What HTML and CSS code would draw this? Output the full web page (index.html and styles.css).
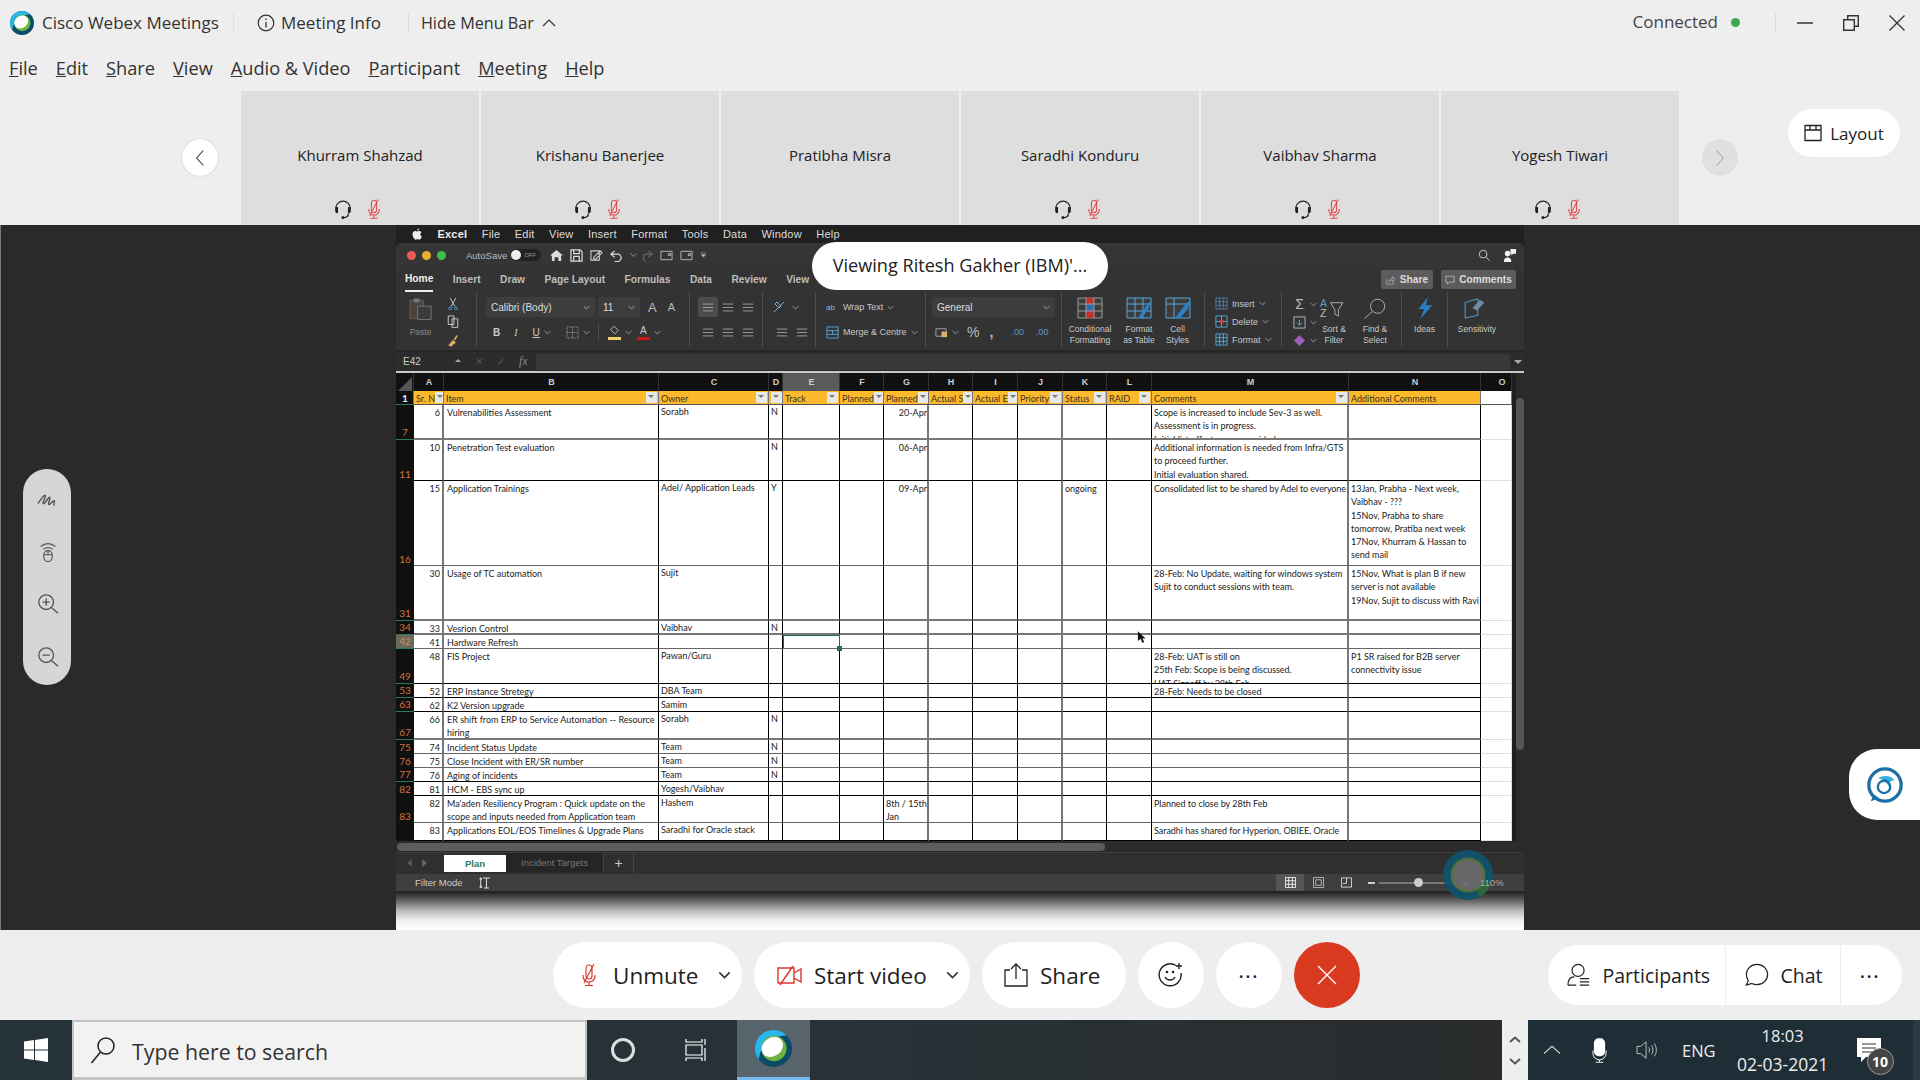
FILE: index.html
```html
<!DOCTYPE html>
<html lang="en">
<head>
    <meta charset="UTF-8">
    <title>Cisco Webex Meetings</title>
    <link rel="stylesheet" href="styles.css">
</head>
<body>
    <!-- shared icons -->
    <svg class="defs">
        <symbol id="webex" viewBox="0 0 24 24">
            <circle cx="12" cy="12" r="12" fill="#0b4a69"/>
            <path d="M12 0A12 12 0 0 0 2.500 19.300C3 11 9 3.500 20.500 3.500A12 12 0 0 0 12 0z" fill="#29b6e8"/>
            <circle cx="12.300" cy="12" r="8.200" fill="#6cb33f"/>
            <ellipse cx="11.200" cy="11" rx="7.400" ry="6" transform="rotate(-35 11.200 11)" fill="#fff"/>
        </symbol>
        <symbol id="headset" viewBox="0 0 20 24">
            <path d="M4 16.500a8 8 0 1 1 12 0M16 17c0 3-2 4.500-5 4.500" fill="none" stroke="currentColor" stroke-width="1.300"/>
            <rect x="1.500" y="9.500" width="3" height="7" rx="1.500" fill="currentColor"/>
            <rect x="15.500" y="9.500" width="3" height="7" rx="1.500" fill="currentColor"/>
            <circle cx="10" cy="21.500" r="1.700" fill="currentColor"/>
        </symbol>
        <symbol id="micoff" viewBox="0 0 16 24">
            <path d="M5 11V5a3 3 0 0 1 6 0v8a3 3 0 0 1-6 0zM2 12v1a6 6 0 0 0 12 0v-1M8 19v3M4 22.500h8M13 1L3 20" fill="none" stroke="currentColor" stroke-width="1.200"/>
        </symbol>
        <symbol id="chev" viewBox="0 0 10 6">
            <path d="M1 1l4 4 4-4" fill="none" stroke="currentColor" stroke-width="1.200"/>
        </symbol>
        <symbol id="lines" viewBox="0 0 14 10">
            <path d="M1 1h12M1 5h12M1 9h12" stroke="currentColor" stroke-width="1"/>
        </symbol>
    </svg>

    <header class="titlebar">
        <svg class="logo"><use href="#webex"/></svg>
        <span class="app-name">Cisco Webex Meetings</span>
        <span class="tsep first"></span>
        <svg class="info" viewBox="0 0 18 18"><circle cx="9" cy="9" r="7.800" fill="none" stroke="#333" stroke-width="1.200"/><path d="M9 8v5.500M9 4.500v1.500" stroke="#333" stroke-width="1.300"/></svg>
        <span class="tlabel">Meeting Info</span>
        <span class="tsep second"></span>
        <span class="tlabel hide">Hide Menu Bar</span>
        <svg class="caret" viewBox="0 0 14 8"><path d="M1 7l6-6 6 6" fill="none" stroke="#333" stroke-width="1.200"/></svg>
        <span class="status">Connected</span>
        <span class="dot"></span>
        <span class="tsep third"></span>
        <svg class="winbtn" viewBox="0 0 16 16"><path d="M0 8h16" stroke="#333" stroke-width="1.500"/></svg>
        <svg class="winbtn" viewBox="0 0 16 16"><path d="M.700 4.700h10.600v10.600H.700zM4.700 4.500V.700h10.600v10.600h-3.800" fill="none" stroke="#333" stroke-width="1.400"/></svg>
        <svg class="winbtn" viewBox="0 0 16 16"><path d="M.500.500l15 15M15.500.500l-15 15" stroke="#333" stroke-width="1.300"/></svg>
    </header>

    <nav class="menubar">
        <span><u>F</u>ile</span>
        <span><u>E</u>dit</span>
        <span><u>S</u>hare</span>
        <span><u>V</u>iew</span>
        <span><u>A</u>udio &amp; Video</span>
        <span><u>P</u>articipant</span>
        <span><u>M</u>eeting</span>
        <span><u>H</u>elp</span>
    </nav>

    <section class="strip">
        <button class="nav-round prev"><svg viewBox="0 0 12 20"><path d="M10 1L2 10l8 9" fill="none" stroke="#333" stroke-width="1.300"/></svg></button>
        <div class="tile"><span class="tname">Khurram Shahzad</span><div class="ticons"><svg class="hs"><use href="#headset"/></svg><svg class="mo"><use href="#micoff"/></svg></div></div>
        <div class="tile"><span class="tname">Krishanu Banerjee</span><div class="ticons"><svg class="hs"><use href="#headset"/></svg><svg class="mo"><use href="#micoff"/></svg></div></div>
        <div class="tile"><span class="tname">Pratibha Misra</span><div class="ticons"></div></div>
        <div class="tile"><span class="tname">Saradhi Konduru</span><div class="ticons"><svg class="hs"><use href="#headset"/></svg><svg class="mo"><use href="#micoff"/></svg></div></div>
        <div class="tile"><span class="tname">Vaibhav Sharma</span><div class="ticons"><svg class="hs"><use href="#headset"/></svg><svg class="mo"><use href="#micoff"/></svg></div></div>
        <div class="tile"><span class="tname">Yogesh Tiwari</span><div class="ticons"><svg class="hs"><use href="#headset"/></svg><svg class="mo"><use href="#micoff"/></svg></div></div>
        <button class="nav-round next"><svg viewBox="0 0 12 20"><path d="M2 1l8 9-8 9" fill="none" stroke="#aaa" stroke-width="1.300"/></svg></button>
        <button class="layout-btn"><svg viewBox="0 0 18 18"><path d="M1 1.500h16v15H1zM1 6h16M6 1.500V6M12 1.500V6" fill="none" stroke="#222" stroke-width="1.300"/></svg>Layout</button>
    </section>

    <main class="stage">
        <div class="shared">
            <div class="mac-menu">
                <svg class="apple" viewBox="0 0 14 16"><path d="M10 0c0 2-1.500 3.500-3 3.500C7 1.800 8.500.300 10 0zM7 4.500c1 0 2-.800 3.300-.800 1.200 0 2.300.600 3 1.700-2.500 1.500-2 5 .500 6-.700 2-2.200 4.600-3.600 4.600-1 0-1.400-.600-2.600-.600s-1.700.600-2.600.600C3.300 16 .800 12 .800 8.500.800 5.500 2.700 3.800 4.500 3.800 5.500 3.800 6.300 4.500 7 4.500z" fill="#eee"/></svg>
                <b>Excel</b><span>File</span><span>Edit</span><span>View</span><span>Insert</span><span>Format</span><span>Tools</span><span>Data</span><span>Window</span><span>Help</span>
            </div>

            <div class="xl-title">
                <i class="light red"></i><i class="light amber"></i><i class="light green"></i>
                <span class="autosave">AutoSave</span>
                <span class="toggle"><i></i>OFF</span>
                <svg class="qa" viewBox="0 0 14 14"><path d="M7 1L0 7h2v6h3V9h4v4h3V7h2z" fill="#ddd"/></svg>
                <svg class="qa" viewBox="0 0 14 14"><path d="M1 1h10l2 2v10H1zM4 1v4h6V1M4 13V8h6v5" fill="none" stroke="#ddd" stroke-width="1.300"/></svg>
                <svg class="qa" viewBox="0 0 14 14"><path d="M1 2h9v10H1zM4 9l7-7 2 2-7 7H4z" fill="none" stroke="#ccc" stroke-width="1.200"/></svg>
                <svg class="qa" viewBox="0 0 14 14"><path d="M5 2L1 5.500 5 9M1 5.500h7a4 4 0 0 1 0 8H5" fill="none" stroke="#ddd" stroke-width="1.300"/></svg>
                <svg class="qa-small"><use href="#chev"/></svg>
                <svg class="qa dim" viewBox="0 0 14 14"><path d="M9 2l4 3.500L9 9M12 5.500H6a4.500 4.500 0 0 0 0 8" fill="none" stroke="#666" stroke-width="1.300"/></svg>
                <svg class="qa" viewBox="0 0 14 14"><path d="M1 2.500h12v9H1zM9 5h2.500v2H9z" fill="none" stroke="#bbb" stroke-width="1"/></svg>
                <svg class="qa" viewBox="0 0 14 14"><path d="M1 2.500h12v9H1zM9 5h2.500v2H9z" fill="none" stroke="#bbb" stroke-width="1"/></svg>
                <svg class="qa-small" viewBox="0 0 10 8"><path d="M1 1h8M2 3.500h6L5 7z" stroke="#bbb" fill="#bbb" stroke-width=".8"/></svg>
                <svg class="find" viewBox="0 0 14 14"><circle cx="6" cy="6" r="4.500" fill="none" stroke="#ccc" stroke-width="1.100"/><path d="M9.500 9.500l4 4" stroke="#ccc" stroke-width="1.100"/></svg>
                <svg class="person" viewBox="0 0 16 16"><path d="M2 15c0-4 2-5 4-5s4 1 4 5zM6 9a3 3 0 1 1 0-6 3 3 0 0 1 0 6z" fill="#eee"/><path d="M9 1h6v5H12l-2 2V6H9z" fill="#eee"/></svg>
            </div>

            <div class="xl-tabs">
                <span class="active">Home</span><span>Insert</span><span>Draw</span><span>Page Layout</span><span>Formulas</span><span>Data</span><span>Review</span><span>View</span>
                <span class="xl-btn share"><svg viewBox="0 0 12 12"><path d="M1 5v6h8V8M4 8c0-3 2-4 4-4V2l3 3-3 3V6C6 6 5 7 4 8z" fill="none" stroke="#aaa"/></svg>Share</span>
                <span class="xl-btn comments"><svg viewBox="0 0 12 12"><path d="M1 1.500h10v7H5L3 11V8.500H1z" fill="none" stroke="#bbb"/></svg>Comments</span>
            </div>

            <div class="ribbon">
                <div class="rg g-clip">
                    <div class="paste">
                        <svg viewBox="0 0 26 24"><path d="M2 3h14v19H2z" fill="#4c433a" stroke="#6a5c4e"/><path d="M6 1h6v4H6z" fill="#777"/><path d="M10 9h14v14H10z" fill="#3c3c3c" stroke="#777"/></svg>
                        <span>Paste</span>
                    </div>
                    <div class="clip-tools">
                        <svg viewBox="0 0 12 14"><path d="M3 1l5 9M9 1L4 10" stroke="#ccc"/><circle cx="3" cy="12" r="1.500" fill="none" stroke="#4aa3df"/><circle cx="9" cy="12" r="1.500" fill="none" stroke="#4aa3df"/></svg>
                        <svg viewBox="0 0 12 14"><path d="M1 1h6v9H1zM5 4h6v9H5z" fill="#333" stroke="#ccc"/></svg>
                        <svg viewBox="0 0 12 14"><path d="M1 12l5-6 3 3-5 4zM7 5l3-4 1 1-3 5z" fill="#d9b36a"/></svg>
                    </div>
                </div>
                <div class="rg g-font">
                    <div class="rrow">
                        <span class="select font-name">Calibri (Body)<svg><use href="#chev"/></svg></span>
                        <span class="select font-size">11<svg><use href="#chev"/></svg></span>
                        <span class="grow-a">A</span><span class="shrink-a">A</span>
                    </div>
                    <div class="rrow fmt">
                        <b class="f-b">B</b><em class="f-i">I</em><u class="f-u">U</u><svg class="mini"><use href="#chev"/></svg>
                        <svg class="bord" viewBox="0 0 14 14"><path d="M1 1h12v12H1zM7 1v12M1 7h12" fill="none" stroke="#aaa" stroke-dasharray="1 1"/></svg><svg class="mini"><use href="#chev"/></svg>
                        <span class="vline"></span>
                        <span class="swatch yellow"><svg viewBox="0 0 14 10"><path d="M7 0l5 5-4 4-5-5z" fill="none" stroke="#ccc"/></svg></span><svg class="mini"><use href="#chev"/></svg>
                        <span class="swatch red">A</span><svg class="mini"><use href="#chev"/></svg>
                    </div>
                </div>
                <div class="rg g-align">
                    <div class="rrow">
                        <span class="al on"><svg><use href="#lines"/></svg></span><span class="al"><svg><use href="#lines"/></svg></span><span class="al"><svg><use href="#lines"/></svg></span>
                    </div>
                    <div class="rrow">
                        <span class="al"><svg><use href="#lines"/></svg></span><span class="al"><svg><use href="#lines"/></svg></span><span class="al"><svg><use href="#lines"/></svg></span>
                    </div>
                </div>
                <div class="rg g-orient">
                    <div class="rrow"><svg class="ori" viewBox="0 0 16 14"><path d="M2 12L12 2M5 2l4 4-2 2-4-4z" fill="none" stroke="#7fb0d8"/></svg><svg class="mini"><use href="#chev"/></svg></div>
                    <div class="rrow"><span class="al"><svg><use href="#lines"/></svg></span><span class="al"><svg><use href="#lines"/></svg></span></div>
                </div>
                <div class="rg g-wrap">
                    <div class="rrow"><span class="wicon">ab</span><span class="rtext">Wrap Text</span><svg class="mini"><use href="#chev"/></svg></div>
                    <div class="rrow"><svg class="ricon" viewBox="0 0 14 14"><path d="M1 1h12v12H1zM1 5h12M1 9h12M7 5v4" fill="none" stroke="#5aa7d8"/></svg><span class="rtext">Merge &amp; Centre</span><svg class="mini"><use href="#chev"/></svg></div>
                </div>
                <div class="rg g-num">
                    <div class="rrow"><span class="select gen">General<svg><use href="#chev"/></svg></span></div>
                    <div class="rrow num-row"><svg class="ricon" viewBox="0 0 14 14"><path d="M1 3h11v8H1z" fill="none" stroke="#aaa"/><path d="M7 6h6v6H7z" fill="#d9b36a"/></svg><svg class="mini"><use href="#chev"/></svg><span class="pct">%</span><span class="comma">,</span><span class="dec">.00</span><span class="dec">.00</span></div>
                </div>
                <div class="rg g-styles">
                    <div class="big"><svg viewBox="0 0 26 22"><path d="M1 1h24v20H1z" fill="#3c3c3c" stroke="#999"/><path d="M9 1h8v6H9zM9 14h8v7H9z" fill="#c6322b"/><path d="M9 7h8v7H9z" fill="#2f6db0"/><path d="M1 7h24M1 14h24M9 1v20M17 1v20" stroke="#999" fill="none"/></svg><span>Conditional Formatting</span></div>
                    <div class="big"><svg viewBox="0 0 26 22"><path d="M1 1h24v20H1z" fill="#3c3c3c" stroke="#5aa7d8"/><path d="M1 7h24M1 14h24M9 1v20M17 1v20" stroke="#5aa7d8" fill="none"/><path d="M12 21l8-12 5-6-2 8-7 10z" fill="#2b7fc4"/></svg><span>Format as Table</span></div>
                    <div class="big"><svg viewBox="0 0 26 22"><path d="M1 1h24v20H1z" fill="#3c3c3c" stroke="#5aa7d8"/><path d="M1 7h24M9 1v20" stroke="#5aa7d8" fill="none"/><path d="M10 21l9-12 6-6-2 9-8 9z" fill="#2b7fc4"/></svg><span>Cell Styles</span></div>
                </div>
                <div class="rg g-cells">
                    <div class="cell-row"><svg class="ricon" viewBox="0 0 14 14"><path d="M1 1h12v12H1zM1 5h12M1 9h12M5 1v12M9 1v12" fill="none" stroke="#4f7ea6"/></svg><span class="rtext">Insert</span><svg class="mini"><use href="#chev"/></svg></div>
                    <div class="cell-row"><svg class="ricon" viewBox="0 0 14 14"><path d="M1 1h12v12H1zM1 7h12M7 1v12" fill="none" stroke="#5aa7d8"/><path d="M5 5l4 4M9 5L5 9" stroke="#d03a30" stroke-width="1.500"/></svg><span class="rtext">Delete</span><svg class="mini"><use href="#chev"/></svg></div>
                    <div class="cell-row"><svg class="ricon" viewBox="0 0 14 14"><path d="M1 1h12v12H1zM1 5h12M1 9h12M5 1v12M9 1v12" fill="none" stroke="#5aa7d8"/></svg><span class="rtext">Format</span><svg class="mini"><use href="#chev"/></svg></div>
                </div>
                <div class="rg g-edit">
                    <div class="sum-col">
                        <div><span class="sigma">Σ</span><svg class="mini"><use href="#chev"/></svg></div>
                        <div><svg class="ricon" viewBox="0 0 14 14"><path d="M1 1h12v12H1z" fill="none" stroke="#bbb"/><path d="M7 4v6M4 7l3 3 3-3" fill="none" stroke="#5aa7d8"/></svg><svg class="mini"><use href="#chev"/></svg></div>
                        <div><svg class="ricon" viewBox="0 0 14 14"><path d="M7 1l6 6-6 6-6-6z" fill="#9a5fb8"/></svg><svg class="mini"><use href="#chev"/></svg></div>
                    </div>
                    <div class="big sort"><svg viewBox="0 0 34 22"><text x="1" y="10" class="az">A</text><text x="1" y="21" class="az z">Z</text><path d="M13 5h14l-5 8v7l-4-2v-5z" fill="none" stroke="#bbb"/></svg><span>Sort &amp; Filter</span></div>
                    <div class="big find-sel"><svg viewBox="0 0 34 24"><circle cx="20" cy="10" r="8" fill="none" stroke="#bbb"/><path d="M14 16L5 24" stroke="#bbb"/></svg><span>Find &amp; Select</span></div>
                </div>
                <div class="rg g-ideas"><div class="big"><svg viewBox="0 0 20 24"><path d="M13 0L3 13h6L5 24 18 9h-7z" fill="#2b7fc4"/></svg><span>Ideas</span></div></div>
                <div class="rg g-sens"><div class="big"><svg viewBox="0 0 30 24"><path d="M2 6l14-4v18L2 23z" fill="none" stroke="#5aa7d8"/><path d="M10 12l8-9 5 3-8 9z" fill="#6f8ba3"/></svg><span>Sensitivity</span></div></div>
            </div>

            <div class="formula">
                <span class="namebox">E42</span>
                <span class="spin"></span>
                <span class="fb-x">✕</span><span class="fb-x">✓</span><em class="fx">fx</em>
                <span class="fbar"></span>
                <i class="fdown"></i>
            </div>

            <div class="sheet">
                <div class="grid">
                    <div class="row colhead"><span class="corner"></span><span>A</span><span>B</span><span>C</span><span>D</span><span class="sel">E</span><span>F</span><span>G</span><span>H</span><span>I</span><span>J</span><span>K</span><span>L</span><span>M</span><span>N</span><span>O</span></div>
                    <div class="row headrow"><span>1</span><span>Sr. N<i></i></span><span>Item<i></i></span><span>Owner<i></i></span><span><i></i></span><span>Track<i></i></span><span>Planned<i></i></span><span>Planned<i></i></span><span>Actual S<i></i></span><span>Actual E<i></i></span><span>Priority<i></i></span><span>Status<i class="on"></i></span><span>RAID<i></i></span><span>Comments<i></i></span><span>Additional Comments</span><span></span></div>
                    <div class="row h35 gb mark"><span>7</span><span>6</span><span>Vulrenabilities Assessment</span><span>Sorabh</span><span>N</span><span></span><span></span><span class="date">20-Apr</span><span></span><span></span><span></span><span></span><span></span><span>Scope is increased to include Sev-3 as well.<br>Assessment is in progress.<br>Initial list efforts were provided</span><span></span><span></span></div>
                    <div class="row h41"><span>11</span><span>10</span><span>Penetration Test evaluation</span><span></span><span>N</span><span></span><span></span><span class="date">06-Apr</span><span></span><span></span><span></span><span></span><span></span><span>Additional information is needed from Infra/GTS to proceed further.<br>Initial evaluation shared.</span><span></span><span></span></div>
                    <div class="row h85 gt"><span>16</span><span>15</span><span>Application Trainings</span><span>Adel/ Application Leads</span><span>Y</span><span></span><span></span><span class="date">09-Apr</span><span></span><span></span><span></span><span>ongoing</span><span></span><span class="tight">Consolidated list to be shared by Adel to everyone</span><span>13Jan, Prabha - Next week, Vaibhav - ???<br>15Nov, Prabha to share tomorrow, Pratiba next week<br>17Nov, Khurram &amp; Hassan to send mail</span><span></span></div>
                    <div class="row h55 gb mark"><span>31</span><span>30</span><span>Usage of TC automation</span><span>Sujit</span><span></span><span></span><span></span><span></span><span></span><span></span><span></span><span></span><span></span><span>28-Feb: No Update, waiting for windows system<br>Sujit to conduct sessions with team.</span><span>15Nov, What is plan B if new server is not available<br>19Nov, Sujit to discuss with Ravi</span><span></span></div>
                    <div class="row h14 gb mark"><span>34</span><span>33</span><span>Vesrion Control</span><span>Vaibhav</span><span>N</span><span></span><span></span><span></span><span></span><span></span><span></span><span></span><span></span><span></span><span></span><span></span></div>
                    <div class="row h14 gt cur"><span>42</span><span>41</span><span>Hardware Refresh</span><span></span><span></span><span class="active-cell"></span><span></span><span></span><span></span><span></span><span></span><span></span><span></span><span></span><span></span><span></span></div>
                    <div class="row h35 mark"><span>49</span><span>48</span><span>FIS Project</span><span>Pawan/Guru</span><span></span><span></span><span></span><span></span><span></span><span></span><span></span><span></span><span></span><span>28-Feb: UAT is still on<br>25th Feb: Scope is being discussed.<br>UAT Signoff by 28th Feb</span><span>P1 SR raised for B2B server connectivity issue</span><span></span></div>
                    <div class="row h14 mark"><span>53</span><span>52</span><span>ERP Instance Stretegy</span><span>DBA Team</span><span></span><span></span><span></span><span></span><span></span><span></span><span></span><span></span><span></span><span>28-Feb: Needs to be closed</span><span></span><span></span></div>
                    <div class="row h14 mark"><span>63</span><span>62</span><span>K2 Version upgrade</span><span>Samim</span><span></span><span></span><span></span><span></span><span></span><span></span><span></span><span></span><span></span><span></span><span></span><span></span></div>
                    <div class="row h28 gb mark"><span>67</span><span>66</span><span>ER shift from ERP to Service Automation -- Resource hiring</span><span>Sorabh</span><span>N</span><span></span><span></span><span></span><span></span><span></span><span></span><span></span><span></span><span></span><span></span><span></span></div>
                    <div class="row h14 gt"><span>75</span><span>74</span><span>Incident Status Update</span><span>Team</span><span>N</span><span></span><span></span><span></span><span></span><span></span><span></span><span></span><span></span><span></span><span></span><span></span></div>
                    <div class="row h14 gt"><span>76</span><span>75</span><span>Close Incident with ER/SR number</span><span>Team</span><span>N</span><span></span><span></span><span></span><span></span><span></span><span></span><span></span><span></span><span></span><span></span><span></span></div>
                    <div class="row h14 mark"><span>77</span><span>76</span><span>Aging of incidents</span><span>Team</span><span>N</span><span></span><span></span><span></span><span></span><span></span><span></span><span></span><span></span><span></span><span></span><span></span></div>
                    <div class="row h14"><span>82</span><span>81</span><span>HCM - EBS sync up</span><span>Yogesh/Vaibhav</span><span></span><span></span><span></span><span></span><span></span><span></span><span></span><span></span><span></span><span></span><span></span><span></span></div>
                    <div class="row h27 gt"><span>83</span><span>82</span><span>Ma'aden Resiliency Program : Quick update on the scope and inputs needed from Application team</span><span>Hashem</span><span></span><span></span><span></span><span>8th / 15th<br>Jan</span><span></span><span></span><span></span><span></span><span></span><span>Planned to close by 28th Feb</span><span></span><span></span></div>
                    <div class="row h18"><span></span><span>83</span><span>Applications EOL/EOS Timelines &amp; Upgrade Plans</span><span>Saradhi for Oracle stack</span><span></span><span></span><span></span><span></span><span></span><span></span><span></span><span></span><span></span><span>Saradhi has shared for Hyperion, OBIEE, Oracle</span><span></span><span></span></div>
                    <svg class="cursor" viewBox="0 0 10 14"><path d="M1 0v11l3-2.500L6 13l2-1-2-4h3.500z" fill="#111"/></svg>
                </div>
                <div class="vscroll"><i></i></div>
            </div>

            <div class="hscroll"><i></i></div>

            <div class="sheet-tabs">
                <span class="arrow left"></span><span class="arrow right"></span>
                <span class="plan">Plan</span>
                <span class="other">Incident Targets</span>
                <span class="plus">+</span>
            </div>

            <div class="statusbar">
                <span class="filter">Filter Mode</span>
                <svg class="fm" viewBox="0 0 12 12"><path d="M4 1h7M7.500 1v10M5 11h5M1 1h1.500v1.500H1zM1 9h1.500v1.500H1zM1.700 3v6" stroke="#ddd" fill="none"/></svg>
                <span class="view on"><svg viewBox="0 0 12 12"><path d="M.500.500h11v11H.500zM4 .500v11M8 .500v11M.500 4h11M.500 8h11" fill="none" stroke="#eee"/></svg></span>
                <span class="view"><svg viewBox="0 0 12 12"><path d="M.500.500h11v11H.500zM3 3h6v6H3z" fill="none" stroke="#bbb"/></svg></span>
                <span class="view"><svg viewBox="0 0 12 12"><path d="M.500 1h11v10H.500zM6 1v6H2" fill="none" stroke="#ddd"/></svg></span>
                <span class="zoom-minus"></span>
                <span class="slider"><i></i></span>
                <span class="zoom-plus">+</span>
                <span class="pct110">110%</span>
            </div>

            <div class="under"></div>

            <div class="viewing">Viewing Ritesh Gakher (IBM)'...</div>
            <div class="spinner"></div>
        </div>

        <div class="annot">
            <svg viewBox="0 0 24 20"><path d="M1 14C5 8 8 4 9 5c1 2-4 9-2 9 3 0 5-8 7-7 1 2-3 7-1 8 2 0 4-5 6-4 1 1-2 4 0 5" fill="none" stroke="#555" stroke-width="1.600"/></svg>
            <svg viewBox="0 0 24 24"><path d="M4 6c5-4 11-4 16 0M7 9c3-2 7-2 10 0" fill="none" stroke="#555" stroke-width="1.300"/><rect x="7.500" y="10.500" width="9" height="12" rx="4.500" fill="none" stroke="#555" stroke-width="1.300"/><path d="M7.500 15h9M12 10.500V15" stroke="#555" stroke-width="1.300"/></svg>
            <svg viewBox="0 0 24 24"><circle cx="10" cy="10" r="8" fill="none" stroke="#555" stroke-width="1.500"/><path d="M10 6v8M6 10h8M16 16l7 6" stroke="#555" stroke-width="1.500"/></svg>
            <svg viewBox="0 0 24 24"><circle cx="10" cy="10" r="8" fill="none" stroke="#555" stroke-width="1.500"/><path d="M6 10h8M16 16l7 6" stroke="#555" stroke-width="1.500"/></svg>
        </div>

        <div class="assist">
            <svg viewBox="0 0 40 40"><circle cx="20" cy="20" r="17" fill="none" stroke="#1d6fa5" stroke-width="3.500"/><path d="M8 30l-3 7 9-3" fill="#1d6fa5"/><path d="M13 13c5-4 14-3 17 2-4 0-6 3-6 7-2-5-7-8-11-9z" fill="#35b1e0"/><circle cx="19" cy="22" r="6.500" fill="none" stroke="#1d6fa5" stroke-width="2.500"/></svg>
        </div>
    </main>

    <section class="toolbar">
        <button class="pill unmute"><svg class="tb-mic"><use href="#micoff"/></svg><span>Unmute</span><svg class="tb-chev"><use href="#chev"/></svg></button>
        <button class="pill video"><svg class="tb-cam" viewBox="0 0 26 24"><path d="M1 5h16v15H1zM17 10l7-4v13l-7-4M16 3L3 22" fill="none" stroke="#d9392a" stroke-width="1.400"/></svg><span>Start video</span><svg class="tb-chev"><use href="#chev"/></svg></button>
        <button class="pill share-btn"><svg class="tb-share" viewBox="0 0 26 24"><path d="M7 7H2v16h22V7h-5M13 16V1M8 6l5-5 5 5" fill="none" stroke="#222" stroke-width="1.300"/></svg><span>Share</span></button>
        <button class="pill round"><svg class="tb-emoji" viewBox="0 0 26 26"><path d="M18 3.500A11 11 0 1 0 23 11" fill="none" stroke="#222" stroke-width="1.400"/><path d="M21 1v6M18 4h6M7 15c2 4 8 4 10 0" fill="none" stroke="#222" stroke-width="1.400"/><circle cx="9" cy="10" r="1.300" fill="#222"/><circle cx="15" cy="10" r="1.300" fill="#222"/></svg></button>
        <button class="pill round dots">···</button>
        <button class="pill round leave"><svg viewBox="0 0 20 20"><path d="M1 1l18 18M19 1L1 19" stroke="#fff" stroke-width="1.400"/></svg></button>
        <div class="side-pill">
            <span class="side participants"><svg viewBox="0 0 26 26"><circle cx="12" cy="8" r="6.500" fill="none" stroke="#222" stroke-width="1.300"/><path d="M1 24c0-6 3-9 7-9M10 24H1M14 17h10M14 20.500h10M14 24h10" fill="none" stroke="#222" stroke-width="1.300"/></svg>Participants</span>
            <span class="side chat"><svg viewBox="0 0 26 26"><path d="M13 1.500c6.500 0 11.500 5 11.500 11s-5 11-11.500 11c-2 0-4-.500-5.500-1.300l-6 1.800 2-5c-1.300-2-2-4-2-6.500 0-6 5-11 11.500-11z" fill="none" stroke="#222" stroke-width="1.300"/></svg>Chat</span>
            <span class="side more">···</span>
        </div>
    </section>

    <footer class="taskbar">
        <div class="start"><svg viewBox="0 0 24 24"><path d="M0 3.500l10-1.400V11.500H0zM11 2l13-2v11.500H11zM0 12.500h10v9.400L0 20.500zM11 12.500h13V24l-13-2z" fill="#fff"/></svg></div>
        <div class="search"><svg viewBox="0 0 26 28"><circle cx="16" cy="10" r="8" fill="none" stroke="#222" stroke-width="1.500"/><path d="M10.500 16L1.500 27" stroke="#222" stroke-width="1.500"/></svg><span>Type here to search</span></div>
        <div class="cortana"><i></i></div>
        <div class="taskview"><svg viewBox="0 0 24 24"><path d="M3 1v3h16V1M3 7h16v10H3zM3 23v-3h16v3M22 1v6M22 10v13" fill="none" stroke="#fff" stroke-width="1.200"/></svg></div>
        <div class="tb-app"><svg><use href="#webex"/></svg></div>
        <div class="tb-fill"></div>
        <div class="tb-scroll"><svg viewBox="0 0 12 7"><path d="M1 6l5-4.500L11 6" fill="none" stroke="#555" stroke-width="2"/></svg><svg viewBox="0 0 12 7"><path d="M1 1l5 4.500L11 1" fill="none" stroke="#555" stroke-width="2"/></svg></div>
        <div class="tray">
            <svg class="tray-up" viewBox="0 0 20 10"><path d="M1 9l9-8 9 8" fill="none" stroke="#ddd" stroke-width="1.300"/></svg>
            <svg class="tray-mic" viewBox="0 0 16 26"><rect x="2" y="0" width="12" height="19" rx="5" fill="#fff"/><path d="M1 13v3a7 7 0 0 0 14 0v-3M8 23v2M4 25.500h8" fill="none" stroke="#fff"/></svg>
            <svg class="tray-vol" viewBox="0 0 24 22"><path d="M1 7h4l6-5v18l-6-5H1zM14 8c1 2 1 4 0 6M17 6c2 3 2 7 0 10M20 4c3 4 3 10 0 14" fill="none" stroke="#ccc" stroke-width="1"/></svg>
            <span class="lang">ENG</span>
            <div class="clock"><span class="time">18:03</span><span class="day">02-03-2021</span></div>
            <div class="notif">
                <svg viewBox="0 0 24 24"><path d="M0 0h24v19H9l-5 5v-5H0z" fill="#fff"/><path d="M5 6h14M5 10h14M5 14h10" stroke="#333"/></svg>
                <span class="badge">10</span>
            </div>
        </div>
    </footer>
</body>
</html>
```

FILE: styles.css
```css
* {
    box-sizing: border-box;
}

html, body {
    margin: 0;
    height: 100%;
}

body {
    width: 1920px;
    height: 1080px;
    overflow: hidden;
    background-color: #eee;
    color: #222;
    font-family: "Open Sans", "Noto Sans", sans-serif;
    display: flex;
    flex-direction: column;
}

button {
    font-family: inherit;
    border: none;
    padding: 0;
    cursor: pointer;
}

.defs {
    display: none;
}

/* title bar */
.titlebar {
    height: 45px;
    flex: none;
    display: flex;
    align-items: center;
    padding-left: 10px;
    font-size: 17px;
    color: #333;
}

.logo {
    width: 24px;
    height: 24px;
}

.app-name {
    margin-left: 8px;
    width: 178px;
    white-space: nowrap;
}

.tsep {
    width: 1px;
    height: 20px;
    background-color: #ddd;
}

.tsep.first {
    margin: 0 23px 0 13px;
}

.tsep.second {
    margin: 0 12px 0 27px;
}

.tsep.third {
    margin: 0 21px 0 35px;
}

.info {
    width: 18px;
    height: 18px;
    margin-right: 6px;
}

.tlabel {
    white-space: nowrap;
}

.tlabel.hide {
    font-size: 16.200px;
}

.caret {
    width: 14px;
    height: 8px;
    margin-left: 8px;
}

.status {
    margin-left: auto;
    margin-bottom: 2px;
    color: #444;
}

.dot {
    width: 9px;
    height: 9px;
    margin-left: 13px;
    border-radius: 50%;
    background-color: #3fa84f;
}

.winbtn {
    width: 16px;
    height: 16px;
    margin-right: 30px;
}

.winbtn:last-child {
    margin-right: 15px;
}

/* menu */
.menubar {
    height: 46px;
    flex: none;
    display: flex;
    align-items: center;
    gap: 18px;
    padding-left: 9px;
    font-size: 18.200px;
    color: #333;
}

/* participant strip */
.strip {
    height: 134px;
    flex: none;
    display: flex;
    gap: 2px;
    padding-left: 241px;
    position: relative;
}

.tile {
    width: 238px;
    background-color: #dedede;
    display: flex;
    flex-direction: column;
    align-items: center;
    font-size: 15px;
}

.tname {
    margin-top: 52px;
    height: 24px;
    line-height: 24px;
}

.ticons {
    margin-top: 30px;
    margin-right: 6px;
    display: flex;
    align-items: center;
    gap: 15px;
    height: 24px;
}

.hs {
    width: 18px;
    height: 22px;
    color: #222;
}

.mo {
    width: 14px;
    height: 22px;
    color: #e5484d;
}

.nav-round {
    position: absolute;
    top: 48px;
    width: 36px;
    height: 37px;
    border-radius: 50%;
    display: flex;
    align-items: center;
    justify-content: center;
}

.nav-round svg {
    width: 10px;
    height: 18px;
}

.nav-round.prev {
    left: 182px;
    background-color: #fff;
    box-shadow: 0 0 2px rgba(0, 0, 0, 0.2);
}

.nav-round.next {
    left: 1702px;
    background-color: #e0e0e0;
}

.layout-btn {
    position: absolute;
    left: 1788px;
    top: 18px;
    width: 112px;
    height: 48px;
    border-radius: 24px;
    background-color: #fff;
    color: #222;
    font-size: 17px;
    display: flex;
    align-items: center;
    justify-content: center;
    gap: 8px;
}

.layout-btn svg {
    width: 18px;
    height: 18px;
}

/* shared screen */
.stage {
    height: 705px;
    flex: none;
    background-color: #2a2a2a;
    border-left: 1px solid #777;
    position: relative;
    display: flex;
    padding-left: 395px;
}

.shared {
    width: 1128px;
    height: 705px;
    position: relative;
    font-family: "Liberation Sans", sans-serif;
    display: flex;
    flex-direction: column;
    background-color: #1f1f1f;
}

.mac-menu {
    height: 18px;
    flex: none;
    display: flex;
    align-items: center;
    background-color: #202020;
    color: #ddd;
    font-size: 11px;
    letter-spacing: 0.200px;
    padding-left: 16px;
    gap: 14.500px;
}

.apple {
    width: 10px;
    height: 12px;
    margin-right: 1px;
}

.mac-menu b {
    color: #eee;
    margin-right: 0;
}

.xl-title {
    height: 24px;
    flex: none;
    display: flex;
    align-items: center;
    background-color: #353535;
    border-radius: 5px 5px 0 0;
    padding-left: 11px;
    color: #bbb;
    font-size: 9.500px;
}

.light {
    width: 9px;
    height: 9px;
    border-radius: 50%;
    margin-right: 6px;
}

.light.red { background-color: #ee5b55; }
.light.amber { background-color: #e3b32f; }
.light.green { background-color: #3fc04c; }

.autosave {
    margin-left: 14px;
}

.toggle {
    margin: 0 9px 0 4px;
    width: 30px;
    height: 12px;
    border-radius: 6px;
    background-color: #222;
    color: #999;
    font-size: 6px;
    display: flex;
    align-items: center;
    gap: 3px;
}

.toggle i {
    width: 10px;
    height: 10px;
    border-radius: 50%;
    background-color: #eee;
}

.qa {
    width: 13px;
    height: 13px;
    margin-right: 7px;
}

.qa-small {
    width: 7px;
    height: 6px;
    margin-right: 3px;
    color: #aaa;
}

.find {
    width: 12px;
    height: 12px;
    margin-left: auto;
    margin-right: 12px;
}

.person {
    width: 15px;
    height: 15px;
    margin-right: 7px;
}

.xl-tabs {
    height: 25px;
    flex: none;
    display: flex;
    align-items: center;
    gap: 19.500px;
    padding: 0 8px 0 9px;
    background-color: #333;
    color: #bdbdbd;
    font-size: 10.200px;
    font-weight: bold;
}

.xl-tabs .active {
    color: #eee;
    position: relative;
    height: 25px;
    line-height: 24px;
    border-bottom: 2px solid #eee;
}

.xl-btn {
    height: 19px;
    border-radius: 2px;
    background-color: #5c5c5c;
    color: #ddd;
    display: flex;
    align-items: center;
    justify-content: center;
    gap: 4px;
}

.xl-btn svg {
    width: 10px;
    height: 10px;
}

.xl-btn.share {
    width: 52px;
    margin-left: auto;
}

.xl-btn.comments {
    width: 75px;
    margin-left: -11.500px;
}

.ribbon {
    height: 60px;
    flex: none;
    display: flex;
    background-color: #333;
    color: #bbb;
    font-size: 9px;
    padding-bottom: 3px;
    border-bottom: 2px solid #262626;
}

.rg {
    flex: none;
    height: 100%;
    border-right: 1px solid #4d4d4d;
    display: flex;
    flex-direction: column;
    gap: 5px;
    padding-top: 5px;
}

.rrow {
    height: 20px;
    display: flex;
    align-items: center;
}

.mini {
    width: 7px;
    height: 5px;
    margin-left: 4px;
    color: #aaa;
    flex: none;
}

.g-clip {
    width: 81px;
    flex-direction: row;
    gap: 14px;
    padding-left: 12px;
}

.paste {
    width: 25px;
    display: flex;
    flex-direction: column;
    align-items: center;
    font-size: 8.500px;
    color: #888;
    gap: 6px;
}

.paste svg {
    width: 25px;
    height: 24px;
}

.clip-tools {
    display: flex;
    flex-direction: column;
    gap: 5px;
}

.clip-tools svg {
    width: 12px;
    height: 14px;
}

.g-font {
    width: 213px;
    padding-left: 9px;
}

.select {
    height: 20px;
    background-color: #3d3d3d;
    color: #ddd;
    font-size: 10px;
    display: flex;
    align-items: center;
    justify-content: space-between;
    padding: 0 5px;
    border-radius: 2px;
}

.select svg {
    width: 7px;
    height: 5px;
    color: #bbb;
}

.font-name {
    width: 109px;
}

.font-size {
    width: 42px;
    margin-left: 3px;
}

.grow-a {
    font-size: 13px;
    margin-left: 8px;
}

.shrink-a {
    font-size: 11px;
    margin-left: 11px;
}

.fmt {
    font-size: 10px;
    padding-left: 7px;
    color: #ccc;
}

.f-i {
    margin-left: 14px;
    font-family: "Liberation Serif", serif;
}

.f-u {
    margin-left: 15px;
}

.bord {
    width: 13px;
    height: 13px;
    margin-left: 15px;
}

.fmt .vline {
    width: 1px;
    height: 18px;
    background-color: #4d4d4d;
    margin: 0 9px 0 8px;
}

.swatch {
    width: 13px;
    height: 15px;
    text-align: center;
    line-height: 12px;
    border-bottom: 3px solid;
    font-size: 10px;
}

.swatch svg {
    width: 12px;
    height: 11px;
    display: block;
}

.swatch.yellow {
    border-color: #f2d36b;
}

.swatch.red {
    border-color: #d3141b;
    margin-left: 5px;
}

.al {
    width: 20px;
    height: 20px;
    display: flex;
    align-items: center;
    justify-content: center;
    color: #aaa;
}

.al svg {
    width: 12px;
    height: 9px;
}

.al.on {
    background-color: #4b4b4b;
    border-radius: 2px;
}

.g-align {
    width: 73px;
    padding-left: 8px;
}

.g-orient {
    width: 53px;
    padding-left: 9px;
}

.ori {
    width: 16px;
    height: 14px;
}

.g-wrap {
    width: 110px;
    padding-left: 10px;
}

.wicon {
    width: 13px;
    font-size: 8px;
    color: #8fb8d8;
}

.ricon {
    width: 13px;
    height: 13px;
    flex: none;
}

.rtext {
    margin-left: 4px;
    color: #c8c8c8;
    white-space: nowrap;
}

.g-num {
    width: 136px;
    padding-left: 6px;
}

.gen {
    width: 123px;
}

.num-row {
    padding-left: 3px;
}

.pct {
    margin-left: 8px;
    font-size: 14px;
}

.comma {
    margin-left: 10px;
    font-size: 14px;
    font-weight: bold;
    width: 10px;
}

.dec {
    margin-left: 12px;
    color: #5a9bc8;
    font-size: 9px;
}

.g-styles {
    width: 143px;
    flex-direction: row;
    gap: 0;
    padding-left: 7px;
    text-align: center;
}

.big {
    display: flex;
    flex-direction: column;
    align-items: center;
    font-size: 8.500px;
    line-height: 11px;
    color: #c8c8c8;
}

.big svg {
    width: 26px;
    height: 22px;
    margin-bottom: 5px;
    flex: none;
}

.g-styles .big:nth-child(1) {
    width: 42px;
}

.g-styles .big:nth-child(2) {
    width: 32px;
    margin-left: 12px;
}

.g-styles .big:nth-child(3) {
    width: 37px;
    margin-left: 4px;
}

.g-cells {
    width: 77px;
    gap: 5px;
    padding: 5px 0 0 10px;
}

.cell-row {
    display: flex;
    align-items: center;
    height: 13px;
}

.g-edit {
    width: 120px;
    flex-direction: row;
    gap: 2px;
    padding-left: 11px;
    text-align: center;
}

.sum-col {
    width: 24px;
    display: flex;
    flex-direction: column;
    gap: 4px;
}

.sum-col > div {
    display: flex;
    align-items: center;
    height: 14px;
}

.sigma {
    font-size: 14px;
    width: 13px;
}

.sort {
    width: 30px;
}

.sort svg {
    width: 30px;
}

.az {
    font-size: 12px;
    fill: #5a9bc8;
}

.az.z {
    fill: #bbb;
}

.find-sel {
    width: 30px;
    margin-left: 9px;
}

.find-sel svg {
    width: 30px;
}

.g-ideas {
    width: 46px;
    text-align: center;
}

.g-sens {
    width: 76px;
    border-right: none;
    text-align: center;
}

.g-sens .big {
    width: 58px;
}

.g-sens .big svg {
    width: 30px;
}

/* formula bar */
.formula {
    height: 21px;
    flex: none;
    display: flex;
    align-items: center;
    background-color: #2c2c2c;
    border-bottom: 2px solid #c8c8c8;
    color: #ccc;
    font-size: 10px;
    padding-left: 7px;
}

.namebox {
    width: 52px;
}

.spin {
    width: 0;
    height: 0;
    border: 3px solid transparent;
    border-bottom-color: #aaa;
    margin-bottom: 5px;
}

.fb-x {
    color: #555;
    margin-left: 14px;
}

.fx {
    font-family: "Liberation Serif", serif;
    color: #888;
    font-size: 12px;
    margin-left: 14px;
}

.fbar {
    flex: 1;
    height: 16px;
    margin: 0 4px 0 8px;
    background-color: #383838;
}

.fdown {
    width: 0;
    height: 0;
    border: 4px solid transparent;
    border-top-color: #aaa;
    margin-top: 4px;
    margin-right: 2px;
}

/* sheet */
.sheet {
    display: flex;
    height: 468px;
    flex: none;
}

.grid {
    width: 1116px;
    height: 468px;
    background-color: #fff;
    font-family: Lato, "Liberation Sans", sans-serif;
    font-size: 9px;
    line-height: 13.300px;
    color: #222;
    position: relative;
}

.row {
    display: grid;
    grid-template-columns: 18px 30px 215px 110px 14px 57px 44px 45px 44px 45px 45px 44px 45px 197px 132px 31px;
}

.h14 { height: 14px; }
.h18 { height: 18px; }
.h27 { height: 27px; }
.h28 { height: 28px; }
.h35 { height: 35px; }
.h41 { height: 41px; }
.h55 { height: 55px; }
.h85 { height: 85px; }

.row > span {
    min-width: 0;
    overflow: hidden;
    padding: 1px 0 0 2px;
    border-right: 1px solid #000;
    border-bottom: 1px solid #000;
}

.row > span:nth-child(3) {
    padding-left: 3px;
}

.row > span:nth-child(4),
.row > span:nth-child(5) {
    padding-top: 0;
}

.row > span:nth-child(2),
.row > span:nth-child(8),
.row > span:nth-child(11),
.row > span:nth-child(14) {
    border-right: 2px solid #777;
}

.row > span:nth-child(2) {
    text-align: right;
    padding-right: 2px;
}

.row > span:nth-child(14) {
    letter-spacing: -0.030px;
}

.row > span.tight {
    letter-spacing: -0.120px;
    white-space: nowrap;
}

.row > span:first-child {
    background-color: #101010;
    color: #d3743c;
    border: none;
    padding: 0;
    display: flex;
    align-items: flex-end;
    justify-content: center;
    font-size: 10px;
    line-height: 13px;
}

.row > span:last-child {
    border-right: 1px solid #ddd;
    border-bottom: 1px solid #ddd;
}

.row.gb > span:not(:first-child):not(:last-child) {
    border-bottom: 2px solid #777;
}

.row.gt > span:not(:first-child):not(:last-child) {
    border-bottom: 1px solid #666;
}

.row.mark > span:first-child {
    border-bottom: 1px solid #2b7a5c;
}

.row.cur > span:first-child {
    background-color: #6a6a5a;
    color: #d69060;
    border-bottom: 1px solid #2b7a5c;
}

.colhead {
    height: 18px;
    background-color: #101010;
    color: #ccc;
    font-family: "Liberation Sans", sans-serif;
    font-weight: bold;
    font-size: 9px;
}

.row.colhead > span {
    text-align: center;
    padding: 0 0 0 1px;
    line-height: 18px;
    border-bottom: none;
    border-right: 1px solid #333;
    color: #ccc;
}

.row.colhead > span:first-child {
    background-color: #111;
    border-right: 1px solid #333;
}

.row.colhead > span:last-child {
    padding-left: 12px;
}

.colhead .corner {
    position: relative;
}

.colhead .corner::after {
    content: "";
    width: 0;
    height: 0;
    border-style: solid;
    border-width: 0 0 14px 14px;
    border-color: transparent transparent #555 transparent;
}

.row.colhead > span.sel {
    background-color: #5a5a5a;
}

.headrow {
    height: 14px;
    background-color: #fdb92c;
    font-size: 9px;
    line-height: 13px;
    color: #3a3020;
}

.headrow > span {
    display: flex;
    justify-content: space-between;
    white-space: nowrap;
}

.row.headrow > span {
    padding: 1px 1px 0 2px;
    border-right: 1px solid #777;
    border-bottom: 1px solid #555;
}

.row.headrow > span:first-child {
    color: #eee;
    justify-content: center;
    align-items: center;
    font-weight: bold;
    border-bottom: 1px solid #2b7a5c;
}

.row.headrow > span:nth-child(2) {
    text-align: left;
    border-right: 1px solid #777;
}

.row.headrow > span:last-child {
    background-color: #fff;
}

.headrow i {
    flex: none;
    width: 11px;
    height: 11px;
    background-color: #e8e8e8;
    position: relative;
    margin-left: auto;
}

.headrow i::after {
    content: "";
    position: absolute;
    left: 2px;
    top: 3px;
    border: 3.500px solid transparent;
    border-top-color: #777;
}

.date {
    text-align: right;
}

.row > span.active-cell {
    border: 1px solid #1f6f4f;
    border-bottom-width: 2px;
    overflow: visible;
    position: relative;
}

.active-cell::after {
    content: "";
    position: absolute;
    right: -3px;
    bottom: -3px;
    width: 5px;
    height: 5px;
    background-color: #1f6f4f;
}

.cursor {
    position: absolute;
    left: 741px;
    top: 258px;
    width: 9px;
    height: 13px;
}

.vscroll {
    width: 12px;
    background-color: #2a2a2a;
    border-left: 4px solid #1e1e1e;
    padding-top: 25px;
}

.vscroll i {
    display: block;
    width: 8px;
    height: 352px;
    background-color: #555;
    border-radius: 4px;
}

.hscroll {
    height: 11px;
    flex: none;
    background-color: #2b2b2b;
    padding: 2px 0 1px 1px;
}

.hscroll i {
    display: block;
    width: 708px;
    height: 8px;
    background-color: #5c5c5c;
    border-radius: 4px;
}

.sheet-tabs {
    height: 22px;
    flex: none;
    display: flex;
    align-items: center;
    background-color: #2f2f2f;
    border-top: 1px solid #3c3c3c;
    font-size: 9.500px;
    padding-left: 11px;
    padding-bottom: 1px;
    color: #777;
}

.arrow {
    width: 0;
    height: 0;
    border: 4px solid transparent;
    margin-right: 10px;
}

.arrow.left {
    border-right: 5px solid #555;
    border-left: none;
}

.arrow.right {
    border-left: 5px solid #666;
    border-right: none;
}

.plan {
    width: 62px;
    height: 17px;
    line-height: 17px;
    margin-left: 7px;
    background-color: #fff;
    color: #2f7a5f;
    font-weight: bold;
    text-align: center;
}

.other {
    width: 98px;
    height: 20px;
    line-height: 20px;
    background-color: #252525;
    border-right: 1px solid #444;
    text-align: center;
}

.plus {
    width: 30px;
    text-align: center;
    font-size: 14px;
    color: #ccc;
    border-right: 1px solid #444;
    line-height: 20px;
}

.statusbar {
    height: 18px;
    flex: none;
    display: flex;
    align-items: center;
    background-color: #3e3e3e;
    border-bottom: 1px solid #222;
    font-size: 9.500px;
    color: #ccc;
    padding: 0 11px 0 19px;
}

.filter {
    width: 64px;
    white-space: nowrap;
}

.fm {
    width: 12px;
    height: 12px;
}

.view {
    width: 28px;
    height: 100%;
    display: flex;
    align-items: center;
    justify-content: center;
}

.view svg {
    width: 11px;
    height: 11px;
}

.view.on {
    background-color: #555;
    margin-left: auto;
}

.zoom-minus {
    width: 7px;
    height: 2px;
    background-color: #ccc;
    margin: 0 4px 0 8px;
}

.slider {
    width: 77px;
    height: 2px;
    background-color: #777;
    position: relative;
}

.slider i {
    position: absolute;
    left: 35px;
    top: -4px;
    width: 9px;
    height: 9px;
    border-radius: 50%;
    background-color: #ccc;
}

.zoom-plus {
    margin-left: 6px;
    font-size: 11px;
    width: 15px;
}

.pct110 {
    width: 36px;
    padding-left: 3px;
    color: #aaa;
    white-space: nowrap;
    position: relative;
    z-index: 1;
}

.under {
    flex: 1;
    background: linear-gradient(#222 0%, #555 18%, #bbb 50%, #f0f0f0 75%, #fff 100%);
}

.viewing {
    position: absolute;
    left: 416px;
    top: 17px;
    width: 296px;
    height: 48px;
    line-height: 47px;
    border-radius: 24px;
    background-color: #fff;
    color: #222;
    text-align: center;
    font-family: "Open Sans", sans-serif;
    font-size: 18.100px;
}

.spinner {
    position: absolute;
    left: 1047px;
    top: 625px;
    width: 50px;
    height: 50px;
    border-radius: 50%;
    background: radial-gradient(circle at 50% 50%, #6c6c6c 0 15px, #4f7a3a 16px 17px, transparent 18px), conic-gradient(#0d5470 0 30%, #2e6b3c 30% 42%, #0d5470 42%);
    opacity: 0.9;
}

/* left annotation pill */
.annot {
    position: absolute;
    left: 22px;
    top: 244px;
    width: 48px;
    height: 216px;
    border-radius: 24px;
    background-color: #d6d6d6;
    display: flex;
    flex-direction: column;
    align-items: center;
    padding: 20px 0 0 1px;
    gap: 30px;
}

.annot svg {
    width: 22px;
    height: 22px;
}

.annot svg:last-child {
    margin-top: 1px;
}

.assist {
    position: absolute;
    right: 0;
    top: 524px;
    width: 71px;
    height: 71px;
    background-color: #fff;
    border-radius: 28px 0 0 28px;
    display: flex;
    align-items: center;
    justify-content: center;
}

.assist svg {
    width: 38px;
    height: 38px;
}

/* meeting controls */
.toolbar {
    height: 90px;
    flex: none;
    display: flex;
    align-items: center;
    gap: 12px;
    padding-left: 553px;
}

.pill {
    height: 66px;
    border-radius: 33px;
    background-color: #fff;
    color: #222;
    font-size: 22.500px;
    display: flex;
    align-items: center;
    flex: none;
}

.pill svg {
    flex: none;
}

.unmute {
    width: 189px;
    padding-left: 28px;
}

.tb-mic {
    width: 16px;
    height: 26px;
    color: #d9392a;
    margin-right: 16px;
}

.tb-chev {
    width: 13px;
    height: 8px;
    color: #333;
    margin-left: auto;
    margin-right: 11px;
}

.video {
    width: 216px;
    padding-left: 23px;
}

.tb-cam {
    width: 26px;
    height: 24px;
    margin-right: 11px;
}

.share-btn {
    width: 143.500px;
    padding-left: 21px;
}

.tb-share {
    width: 26px;
    height: 24px;
    margin-right: 11px;
}

.round {
    width: 66px;
    justify-content: center;
}

.tb-emoji {
    width: 26px;
    height: 26px;
}

.dots {
    font-size: 22px;
    letter-spacing: 1px;
}

.leave {
    background-color: #d93a20;
}

.leave svg {
    width: 20px;
    height: 20px;
}

.side-pill {
    height: 60px;
    width: 354px;
    margin-left: 176px;
    background-color: #fff;
    border-radius: 30px;
    display: flex;
    align-items: center;
    font-size: 19.500px;
}

.side {
    height: 100%;
    display: flex;
    align-items: center;
    gap: 12px;
    border-right: 1px solid #eee;
}

.side svg {
    width: 24px;
    height: 24px;
}

.participants {
    width: 178px;
    padding-left: 19px;
}

.chat {
    width: 115px;
    padding-left: 19px;
}

.more {
    border: none;
    padding-left: 19px;
    font-size: 22px;
    letter-spacing: 1px;
}

/* windows taskbar */
.taskbar {
    height: 60px;
    flex: none;
    display: flex;
    background: linear-gradient(90deg, #263239 0%, #273238 40%, #2a2c2d 78%);
}

.start {
    width: 72px;
    display: flex;
    align-items: center;
    justify-content: center;
}

.start svg {
    width: 24px;
    height: 24px;
}

.search {
    width: 515px;
    background-color: #f2f2f2;
    border: 2px solid #c4c4c4;
    border-bottom-width: 3px;
    display: flex;
    align-items: center;
    padding-left: 16px;
    font-size: 21.300px;
    color: #333;
    gap: 16px;
}

.search span {
    padding-top: 3px;
}

.search svg {
    width: 26px;
    height: 28px;
}

.cortana {
    width: 72px;
    display: flex;
    align-items: center;
    justify-content: center;
}

.cortana i {
    width: 24px;
    height: 24px;
    border: 3px solid #ddd;
    border-radius: 50%;
}

.taskview {
    width: 78px;
    padding-right: 6px;
    display: flex;
    align-items: center;
    justify-content: center;
}

.taskview svg {
    width: 24px;
    height: 24px;
}

.tb-app {
    width: 73px;
    background-color: #57646b;
    border-bottom: 3px solid #76b9ed;
    display: flex;
    align-items: center;
    justify-content: center;
}

.tb-app svg {
    width: 37px;
    height: 37px;
}

.tb-fill {
    flex: 1;
}

.tb-scroll {
    width: 26px;
    background-color: #eee;
    display: flex;
    flex-direction: column;
    align-items: center;
    justify-content: space-around;
    padding: 8px 0;
}

.tb-scroll svg {
    width: 12px;
    height: 7px;
}

.tray {
    width: 392px;
    background-color: #1f2d36;
    border-right: 7px solid #2a3a44;
    color: #eee;
    display: flex;
    align-items: center;
    position: relative;
}

.tray-up {
    width: 18px;
    height: 10px;
    margin-left: 15px;
}

.tray-mic {
    width: 15px;
    height: 25px;
    margin-left: 31px;
}

.tray-vol {
    width: 22px;
    height: 20px;
    margin-left: 29px;
}

.lang {
    margin-left: 24px;
    font-size: 16.500px;
}

.clock {
    margin-left: 21px;
    width: 92px;
    display: flex;
    flex-direction: column;
    align-items: center;
    line-height: 28px;
    white-space: nowrap;
}

.time {
    font-size: 16.500px;
}

.day {
    font-size: 17.500px;
}

.notif {
    margin-left: 28px;
    width: 37px;
    position: relative;
    display: flex;
}

.notif svg {
    width: 24px;
    height: 24px;
}

.badge {
    position: absolute;
    left: 10px;
    top: 10px;
    width: 27px;
    height: 27px;
    line-height: 25px;
    border-radius: 50%;
    border: 1px solid #999;
    background-color: #444;
    color: #fff;
    text-align: center;
    font-size: 14px;
    font-weight: bold;
}
```
